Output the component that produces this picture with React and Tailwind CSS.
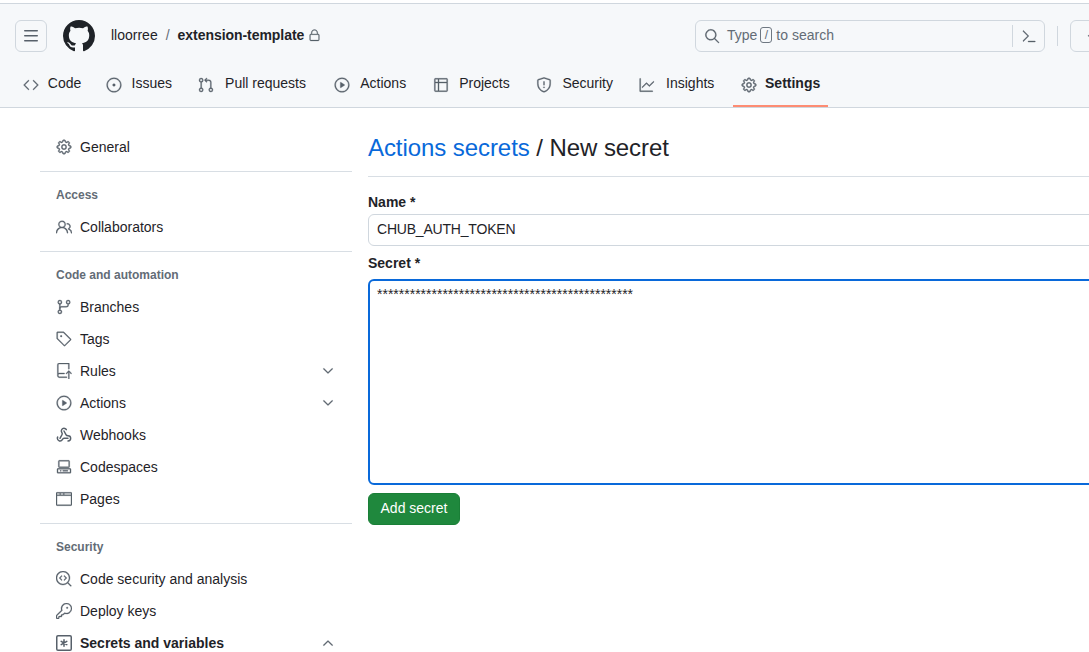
import React from "react";
import {
  GoCode, GoIssueOpened, GoGitPullRequest, GoPlay, GoTable, GoShield, GoGraph, GoGear,
  GoPeople, GoGitBranch, GoTag, GoRepoPush, GoCodespaces, GoBrowser, GoCodescan,
  GoKey, GoLock, GoSearch, GoCommandPalette, GoChevronDown, GoChevronUp, GoPlus,
} from "react-icons/go";
import { Webhook } from "lucide-react";

function MarkGithub({ className }) {
  return (
    <svg viewBox="0 0 16 16" fill="currentColor" className={className}>
      <path d="M8 0c4.42 0 8 3.58 8 8a8.013 8.013 0 0 1-5.45 7.59c-.4.08-.55-.17-.55-.38 0-.27.01-1.13.01-2.2 0-.75-.25-1.23-.54-1.48 1.78-.2 3.65-.88 3.65-3.95 0-.88-.31-1.59-.82-2.15.08-.2.36-1.02-.08-2.12 0 0-.67-.22-2.2.82-.64-.18-1.32-.27-2-.27-.68 0-1.36.09-2 .27-1.53-1.03-2.2-.82-2.2-.82-.44 1.1-.16 1.92-.08 2.12-.51.56-.82 1.28-.82 2.15 0 3.06 1.86 3.75 3.64 3.95-.23.2-.44.55-.51 1.07-.46.21-1.61.55-2.33-.66-.15-.24-.6-.83-1.23-.82-.67.01-.27.38.01.53.34.19.73.9.82 1.13.16.45.68 1.31 2.69.94 0 .67.01 1.3.01 1.49 0 .21-.15.45-.55.38A7.995 7.995 0 0 1 0 8c0-4.42 3.58-8 8-8Z" />
    </svg>
  );
}

function ThreeBars({ className }) {
  return (
    <svg viewBox="0 0 16 16" fill="currentColor" className={className}>
      <path d="M1 2.75A.75.75 0 0 1 1.75 2h12.5a.75.75 0 0 1 0 1.5H1.75A.75.75 0 0 1 1 2.75Zm0 5A.75.75 0 0 1 1.75 7h12.5a.75.75 0 0 1 0 1.5H1.75A.75.75 0 0 1 1 7.75ZM1.75 12h12.5a.75.75 0 0 1 0 1.5H1.75a.75.75 0 0 1 0-1.5Z" />
    </svg>
  );
}

function KeyAsterisk() {
  return (
    <svg viewBox="0 0 16 16" fill="none" stroke="currentColor" className="h-4 w-4 shrink-0 text-[#57606a]">
      <rect x="0.75" y="0.75" width="14.5" height="14.5" rx="1.25" strokeWidth="1.5" />
      <path d="M8 4.75v6.5M5.2 6.4l5.6 3.2M10.8 6.4l-5.6 3.2" strokeWidth="1.5" strokeLinecap="round" />
    </svg>
  );
}

function WebhookIcon() {
  return <Webhook className="h-4 w-4 shrink-0 text-[#57606a]" strokeWidth={2.2} />;
}

// the go icons are the thin 24px drawings, a little stroke brings them to the 16px weight
const iconClass = "h-4 w-4 shrink-0 text-[#57606a] [stroke-width:0.5]";

const tabs = [
  { label: "Code", icon: GoCode },
  { label: "Issues", icon: GoIssueOpened },
  { label: "Pull requests", icon: GoGitPullRequest },
  { label: "Actions", icon: GoPlay },
  { label: "Projects", icon: GoTable },
  { label: "Security", icon: GoShield },
  { label: "Insights", icon: GoGraph },
  { label: "Settings", icon: GoGear, active: true },
];

// the label keeps the width of its bold form, so tabs don't shift when selected
function Tab({ tab }) {
  const Icon = tab.icon;
  return (
    <div className={`flex h-full items-center gap-2 border-b-2 px-2 pb-[4px] ${tab.active ? "border-[#fd8c73] font-bold" : "border-transparent"}`}>
      <Icon className={iconClass} />
      <span
        data-content={tab.label}
        className="relative top-[-1px] text-center before:invisible before:block before:h-0 before:overflow-hidden before:font-bold before:content-[attr(data-content)]"
      >
        {tab.label}
      </span>
    </div>
  );
}

function SideItem({ icon: Icon, label, chevron, bold }) {
  return (
    <div className="flex h-8 items-center pl-4 pr-4 text-[14px] text-[#1f2328]">
      <Icon className={iconClass} />
      <span className={`ml-2 flex-1 ${bold ? "font-bold" : ""}`}>{label}</span>
      {chevron === "down" && <GoChevronDown className={iconClass} />}
      {chevron === "up" && <GoChevronUp className={iconClass} />}
    </div>
  );
}

function SideHeading({ children }) {
  return <div className="flex h-8 items-center pl-4 text-[12px] font-bold text-[#636c76]">{children}</div>;
}

function SideDivider() {
  return <div className="mb-[7px] mt-2 border-t border-[#d8dee4]" />;
}

export default function App() {
  return (
    <div className="h-[652px] w-[1089px] overflow-hidden bg-white text-[14px] text-[#1f2328] [font-family:'Liberation_Sans',Arial,sans-serif]">
      <div className="h-[3px] bg-white" />
      <header className="h-[105px] border-y border-[#d0d7de] bg-[#f6f8fa]">
        <div className="flex h-[64px] items-center">
          <div className="flex min-w-0 flex-1 items-center pl-[15px]">
            <div className="flex h-8 w-8 items-center justify-center rounded-md border border-[#d0d7de] text-[#57606a]">
              <ThreeBars className="h-4 w-4" />
            </div>
            <MarkGithub className="ml-4 h-8 w-8 text-[#1f2328]" />
            <div className="ml-4 flex items-center pb-[2px]">
              <span>lloorree</span>
              <span className="ml-2 text-[#636c76]">/</span>
              <span className="ml-2 font-bold tracking-[-0.05px]">extension-template</span>
              <GoLock className="ml-[4px] h-[13px] w-[13px] text-[#57606a] [stroke-width:0.5]" />
            </div>
          </div>
          <div className="flex w-[394px] shrink-0 items-center overflow-hidden">
            <div className="flex h-8 w-[350px] shrink-0 items-center rounded-md border border-[#d0d7de] pl-2 text-[#636c76]">
              <GoSearch className={iconClass} />
              <div className="flex items-center pb-[2px]">
                <span className="ml-[7px]">Type</span>
                <span className="ml-[3px] flex h-[16px] w-[12px] items-center justify-center rounded-[3px] border border-[#6e7781] text-[12px] leading-none">/</span>
                <span className="ml-[4px]">to search</span>
              </div>
              <div className="ml-auto flex h-[22px] items-center border-l border-[#d0d7de] pl-[8px] pr-[7px]">
                <GoCommandPalette className={iconClass} />
              </div>
            </div>
            <div className="ml-3 h-5 w-px shrink-0 bg-[#d0d7de]" />
            <div className="ml-3 flex h-8 w-12 shrink-0 items-center rounded-md border border-[#d0d7de] pl-[14px] text-[#57606a]">
              <GoPlus className="h-4 w-4 [stroke-width:0.5]" />
            </div>
          </div>
        </div>
        <nav className="flex h-[39px] items-center gap-2 pl-[15px]">
          {tabs.map((t) => (
            <Tab key={t.label} tab={t} />
          ))}
        </nav>
      </header>

      <div className="flex">
        <aside className="ml-10 w-[312px] shrink-0 pt-[23px]">
          <SideItem icon={GoGear} label="General" />
          <SideDivider />
          <SideHeading>Access</SideHeading>
          <SideItem icon={GoPeople} label="Collaborators" />
          <SideDivider />
          <SideHeading>Code and automation</SideHeading>
          <SideItem icon={GoGitBranch} label="Branches" />
          <SideItem icon={GoTag} label="Tags" />
          <SideItem icon={GoRepoPush} label="Rules" chevron="down" />
          <SideItem icon={GoPlay} label="Actions" chevron="down" />
          <SideItem icon={WebhookIcon} label="Webhooks" />
          <SideItem icon={GoCodespaces} label="Codespaces" />
          <SideItem icon={GoBrowser} label="Pages" />
          <SideDivider />
          <SideHeading>Security</SideHeading>
          <SideItem icon={GoCodescan} label="Code security and analysis" />
          <SideItem icon={GoKey} label="Deploy keys" />
          <SideItem icon={KeyAsterisk} label="Secrets and variables" chevron="up" bold />
        </aside>

        <main className="ml-4 w-[1000px] shrink-0 pt-[25px]">
          <h1 className="border-b border-[#d8dee4] pb-[13px] text-[24px] leading-[30px] tracking-[-0.07px]">
            <span className="text-[#0969da]">Actions secrets</span> / New secret
          </h1>
          <label className="mt-4 block text-[14px] font-bold leading-[18px]">Name *</label>
          <input
            readOnly
            value="CHUB_AUTH_TOKEN"
            className="mt-[3px] block h-8 w-full rounded-md border border-[#d0d7de] px-2 pb-[2px] text-[14px] tracking-[-0.2px] text-[#1f2328]"
          />
          <label className="mt-2 block text-[14px] font-bold leading-[18px]">Secret *</label>
          <textarea
            readOnly
            value={"*".repeat(47)}
            className="mt-[7px] block h-[206px] w-full resize-none rounded-md border-2 border-[#0969da] px-[7px] py-[3px] text-[14px] leading-5 text-[#1f2328] outline-none"
          />
          <button className="mt-2 flex h-8 w-[92px] items-center justify-center rounded-md border border-[#1a7f37] bg-[#1f883d] pb-[2px] text-[14px] text-white">
            Add secret
          </button>
        </main>
      </div>
    </div>
  );
}
